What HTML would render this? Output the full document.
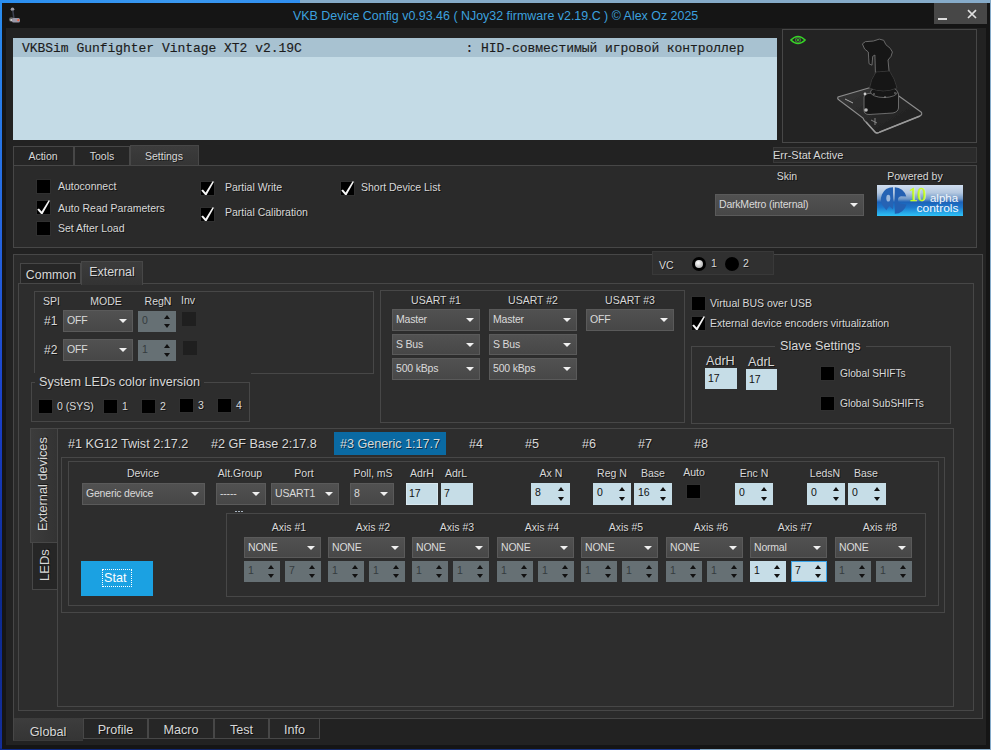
<!DOCTYPE html><html><head><meta charset="utf-8"><style>
*{margin:0;padding:0;box-sizing:border-box}
html,body{width:991px;height:750px;overflow:hidden}
body{position:relative;background:linear-gradient(90deg,#1f8ff0 0%,#4aa0e8 40%,#9ab8d0 100%);font-family:"Liberation Sans",sans-serif;font-size:10.5px;color:#d8d8d8}
.a{position:absolute}
.t{position:absolute;white-space:nowrap;line-height:13px;text-shadow:1px 1px 0 rgba(0,0,0,.55)}
.c{text-align:center}
.bd{border:1px solid #474747}
.dd{position:absolute;background:linear-gradient(#515151,#474747);border:1px solid #5a5a5a;box-sizing:content-box;color:#dadada}
.dd span{position:absolute;left:3px;top:3px;line-height:13px;white-space:nowrap;letter-spacing:-0.2px}
.dd i{position:absolute;right:5px;top:50%;margin-top:-2px;width:0;height:0;border-left:4px solid transparent;border-right:4px solid transparent;border-top:4.5px solid #f0f0f0}
.sp{position:absolute;background:#66706f;background:#667074;color:#353b3e}
.sp.en{background:#c6dde7;color:#111}
.sp span{position:absolute;left:4px;top:2.5px;line-height:13px}
.sp.foc{box-shadow:inset 0 0 0 1px #3aa6ec}
.sp b{position:absolute;right:6.5px;width:0;height:0;border-left:3.5px solid transparent;border-right:3.5px solid transparent}
.sp b.up{top:4px;border-bottom:4px solid #111}
.sp b.dn{bottom:4px;border-top:4px solid #111}
.cb{position:absolute;width:13px;height:13px;background:#000;box-shadow:0 0 0 1px #303030}
.cb svg{position:absolute;left:-1px;top:-1px}
</style></head><body><div class="a " style="left:0px;top:0px;width:991px;height:750px;background:#86abc9"></div>
<div class="a " style="left:0px;top:0px;width:300px;height:4px;background:linear-gradient(90deg,#2a8ef0,#3a98f0 60%,#2f8ef0)"></div>
<div class="a " style="left:0px;top:0px;width:2px;height:750px;background:linear-gradient(#2a8ef0,#2566e0 30%,#1a3fc8 55%,#0c2a90 80%,#142e9a)"></div>
<div class="a " style="left:0px;top:748px;width:700px;height:2px;background:linear-gradient(90deg,#0e2a8a,#13245e 40%,#1a3480 70%,#2040a0)"></div>
<div class="a " style="left:2px;top:3px;width:988px;height:746px;background:#151515"></div>
<div class="a " style="left:6px;top:28px;width:980px;height:717px;background:#222222"></div>
<div class="t " style="left:293px;top:9px;color:#3ca0de;font-size:12.45px;line-height:15px;text-shadow:none">VKB Device Config v0.93.46 ( NJoy32 firmware v2.19.C ) &copy; Alex Oz 2025</div>
<div class="a " style="left:934px;top:3px;width:53px;height:21px;background:#474747"></div>
<div class="a " style="left:938px;top:18px;width:9px;height:2px;background:#dcdcdc;height:1.6px"></div>
<svg class="a" style="left:967px;top:9px" width="10" height="10" viewBox="0 0 10 10"><path d="M1 1.2 L9 9 M9 1.2 L1 9" stroke="#e0e0e0" stroke-width="1.7"/></svg>
<svg class="a" style="left:7px;top:6px" width="14" height="18" viewBox="0 0 14 18"><circle cx="5.5" cy="3.2" r="1.8" fill="#9a9aa4"/><path d="M5.8 4.5 L7 13" stroke="#3c4050" stroke-width="1.6"/><ellipse cx="4.5" cy="13.5" rx="2.5" ry="2.2" fill="#6a6a6a"/><rect x="5" y="12" width="8" height="4.5" rx="1.5" fill="#9a98a8"/><circle cx="11.3" cy="14.2" r="1.1" fill="#e86040"/><circle cx="4.2" cy="14" r="0.9" fill="#ddd"/></svg>
<div class="a " style="left:13px;top:38px;width:764px;height:102px;background:#c4dbe6"></div>
<div class="a " style="left:13px;top:38px;width:764px;height:19px;background:#a8c2d1"></div>
<div class="t " style="left:22px;top:41px;letter-spacing:-0.03px;font-family:'Liberation Mono',monospace;font-size:13px;color:#1c1c1c;text-shadow:none;line-height:15px;-webkit-text-stroke:0.15px #1c1c1c">VKBSim Gunfighter Vintage XT2 v2.19C</div>
<div class="t " style="left:465.6px;top:41px;letter-spacing:-0.06px;font-family:'Liberation Mono',monospace;font-size:13px;color:#1c1c1c;text-shadow:none;line-height:15px;-webkit-text-stroke:0.15px #1c1c1c">: HID-совместимый игровой контроллер</div>
<div class="a bd" style="left:782px;top:29px;width:195px;height:114px;background:#232323"></div>
<svg class="a" style="left:790px;top:35px" width="16" height="10" viewBox="0 0 16 10"><path d="M0.9 5 Q8 -2.2 15.1 5 Q8 12.2 0.9 5Z" fill="none" stroke="#36d626" stroke-width="1.5"/><circle cx="8" cy="5" r="2.4" fill="none" stroke="#4a7a40" stroke-width="1.1"/><circle cx="8" cy="5" r="1" fill="#36d626"/></svg>
<svg class="a" style="left:825px;top:30px" width="110" height="110" viewBox="0 0 110 110">
<defs><linearGradient id="pl" x1="0" y1="0" x2="1" y2="1"><stop offset="0" stop-color="#363636"/><stop offset="1" stop-color="#1c1c1c"/></linearGradient>
<filter id="gl" x="-10%" y="-10%" width="120%" height="120%"><feGaussianBlur stdDeviation="0.45"/></filter></defs>
<g filter="url(#gl)">
<path d="M13 67 Q12 69 14 70 L26 79 L38 88 Q39 91 41 92 L50 102 Q52 104 55 102 L95 86 Q98 84 96 82 L60 56 Q57 54 54 55 Z" fill="url(#pl)" stroke="#8c8c8c" stroke-width="1.1"/>
<path d="M41 92 L50 102 Q52 104 55 102 L95 86" fill="none" stroke="#9a9a9a" stroke-width="1.5"/>
<path d="M39 67 Q39 64 43 63.5 L70 61 Q73.5 61 73.5 64 L73.5 78 Q73 82 68 83 L44 84.5 Q39 84.5 39 80 Z" fill="#181818" stroke="#6a6a6a" stroke-width="1"/>
<ellipse cx="59" cy="62" rx="13.5" ry="5.5" fill="#121212" stroke="#666" stroke-width="1"/>
<path d="M37.4 13.9 L40.3 11.7 L48.4 11 L54.3 9.1 L58.7 10.3 L60.9 14.7 L65.2 18.3 L67.4 22 L66 26.4 L63 30 L64.5 46 L50.5 46 L49.9 25 L47.7 26.4 L47 35.2 L44 33.7 L43.3 22 L39.6 19 Z" fill="#151515" stroke="#6a6a6a" stroke-width="1" stroke-linejoin="round"/>
<path d="M44.5 58 Q46 49 51 42 L64.5 41 Q70 49 72 58 Q58 64 44.5 58 Z" fill="#121212" stroke="#3e3e3e" stroke-width="0.8"/>
<circle cx="40" cy="64" r="1.4" fill="#ccc"/><circle cx="41" cy="80" r="1.8" fill="#bbb"/>
<circle cx="49" cy="64" r="0.8" fill="#999"/><circle cx="60" cy="67" r="0.8" fill="#999"/><circle cx="70" cy="63" r="0.8" fill="#999"/>
<path d="M20 69 L28 73" stroke="#aaa" stroke-width="1"/>
<path d="M46 90 L52 93 M50 88 L50 95" stroke="#999" stroke-width="0.8"/>
</g>
</svg>
<div class="a bd" style="left:13px;top:146px;width:61px;height:20px;background:#262626"></div>
<div class="a bd" style="left:74px;top:146px;width:56px;height:20px;background:#262626"></div>
<div class="a bd" style="left:130px;top:145px;width:69px;height:22px;background:linear-gradient(#3c3c3c,#343434);border-bottom:none"></div>
<div class="t c " style="left:13px;top:150px;width:60px;">Action</div>
<div class="t c " style="left:74px;top:150px;width:56px;">Tools</div>
<div class="t c " style="left:130px;top:150px;width:68px;">Settings</div>
<div class="a " style="left:773px;top:147px;width:204px;height:16px;background:#2b2b2b;border:1px solid #3a3a3a"></div>
<div class="t " style="left:773px;top:149px;font-size:11px">Err-Stat Active</div>
<div class="a bd" style="left:13px;top:165px;width:964px;height:83px;background:#2a2a2a"></div>
<div class="cb" style="left:37px;top:180px;"></div>
<div class="t " style="left:58px;top:180px;">Autoconnect</div>
<div class="cb" style="left:37px;top:201px;"><svg width="16" height="16" viewBox="0 -1 16 16" style="overflow:visible"><path d="M1.2 8.6 L2.9 7.6 L5.6 10.6 L12.6 -0.8 L14 -0.2 L6.6 13 L5.1 13 Z" fill="#f4f4f4"/></svg></div>
<div class="t " style="left:58px;top:202px;">Auto Read Parameters</div>
<div class="cb" style="left:37px;top:222px;"></div>
<div class="t " style="left:58px;top:222px;">Set After Load</div>
<div class="cb" style="left:201px;top:182px;"><svg width="16" height="16" viewBox="0 -1 16 16" style="overflow:visible"><path d="M1.2 8.6 L2.9 7.6 L5.6 10.6 L12.6 -0.8 L14 -0.2 L6.6 13 L5.1 13 Z" fill="#f4f4f4"/></svg></div>
<div class="t " style="left:225px;top:181px;">Partial Write</div>
<div class="cb" style="left:201px;top:208px;"><svg width="16" height="16" viewBox="0 -1 16 16" style="overflow:visible"><path d="M1.2 8.6 L2.9 7.6 L5.6 10.6 L12.6 -0.8 L14 -0.2 L6.6 13 L5.1 13 Z" fill="#f4f4f4"/></svg></div>
<div class="t " style="left:225px;top:206px;">Partial Calibration</div>
<div class="cb" style="left:341px;top:182px;"><svg width="16" height="16" viewBox="0 -1 16 16" style="overflow:visible"><path d="M1.2 8.6 L2.9 7.6 L5.6 10.6 L12.6 -0.8 L14 -0.2 L6.6 13 L5.1 13 Z" fill="#f4f4f4"/></svg></div>
<div class="t " style="left:361px;top:181px;">Short Device List</div>
<div class="t c " style="left:757px;top:170px;width:60px;">Skin</div>
<div class="t c " style="left:870px;top:170px;width:90px;">Powered by</div>
<div class="dd" style="left:715px;top:194px;width:147px;height:20px;"><span>DarkMetro (internal)</span><i></i></div>
<svg class="a" style="left:877px;top:185px" width="86" height="31" viewBox="0 0 86 31">
<defs><linearGradient id="lg" x1="0" y1="0" x2="0" y2="1"><stop offset="0" stop-color="#d0def0"/><stop offset=".25" stop-color="#b4c8e0"/><stop offset=".45" stop-color="#6f98c8"/><stop offset=".55" stop-color="#1d62b8"/><stop offset=".72" stop-color="#1c78cc"/><stop offset="1" stop-color="#2ec4f8"/></linearGradient></defs>
<rect width="86" height="31" fill="url(#lg)"/>
<path d="M16 2.2 A12 12 0 0 0 7.3 22.5 L9.3 25.3 L12.3 21 L16 24.5 Z" fill="#2663b4"/>
<ellipse cx="11.3" cy="13.2" rx="2" ry="3.4" fill="#9cb8dc"/>
<path d="M17.8 2.2 A12 13 0 0 1 29.3 11.5 L24 11.3 Q20.8 12 21 15.2 Q21.4 18.5 24.8 18.8 L29.5 19.5 A12 12.5 0 0 1 17.8 28.8 Z" fill="#2360b2"/>
<text x="32" y="16" font-family="Liberation Serif" font-size="18" fill="#ccff22" stroke="#ccff22" stroke-width="0.5" textLength="17" lengthAdjust="spacingAndGlyphs">10</text>
<text x="53" y="17.3" font-family="Liberation Sans" font-size="11" fill="#f4f8fc" textLength="28" lengthAdjust="spacingAndGlyphs">alpha</text>
<text x="39.5" y="26.6" font-family="Liberation Sans" font-size="10.5" fill="#f4f8fc" textLength="42" lengthAdjust="spacingAndGlyphs">controls</text>
</svg>
<div class="a bd" style="left:13px;top:254px;width:970px;height:465px;background:#2b2b2b"></div>
<div class="a bd" style="left:18px;top:283px;width:956px;height:428px;background:#2d2d2d"></div>
<div class="a " style="left:652px;top:251px;width:122px;height:24px;background:#303030;border:1px solid #393939"></div>
<div class="t " style="left:659px;top:259px;">VC</div>
<div class="a" style="left:692px;top:257px;width:14px;height:14px;border-radius:50%;background:#000"></div>
<div class="a" style="left:695px;top:260px;width:8px;height:8px;border-radius:50%;background:radial-gradient(circle at 40% 35%,#fff,#999)"></div>
<div class="t " style="left:711px;top:257px;">1</div>
<div class="a" style="left:725px;top:257px;width:14px;height:14px;border-radius:50%;background:#000"></div>
<div class="t " style="left:743px;top:257px;">2</div>
<div class="a bd" style="left:20px;top:263px;width:61px;height:21px;background:#262626"></div>
<div class="a bd" style="left:81px;top:261px;width:62px;height:24px;background:linear-gradient(#3c3c3c,#333);border-bottom:none"></div>
<div class="t c " style="left:21px;top:268px;width:60px;font-size:12.4px;line-height:14px">Common</div>
<div class="t c " style="left:82px;top:265px;width:60px;font-size:12.4px;line-height:14px">External</div>
<div class="a bd" style="left:34px;top:291px;width:340px;height:83px;"></div>
<div class="t " style="left:43px;top:295px;">SPI</div>
<div class="t c " style="left:76px;top:295px;width:60px;">MODE</div>
<div class="t c " style="left:138px;top:295px;width:40px;">RegN</div>
<div class="t " style="left:181px;top:294px;">Inv</div>
<div class="t " style="left:44px;top:315px;font-size:12px">#1</div>
<div class="dd" style="left:63px;top:310px;width:68px;height:20px;"><span>OFF</span><i></i></div>
<div class="sp " style="left:138px;top:311px;width:38px;height:21px;"><span>0</span><b class="up"></b><b class="dn"></b></div>
<div class="a " style="left:182px;top:312px;width:14px;height:14px;background:#1f1f1f"></div>
<div class="t " style="left:44px;top:344px;font-size:12px">#2</div>
<div class="dd" style="left:63px;top:339px;width:68px;height:20px;"><span>OFF</span><i></i></div>
<div class="sp " style="left:138px;top:340px;width:38px;height:21px;"><span>1</span><b class="up"></b><b class="dn"></b></div>
<div class="a " style="left:183px;top:341px;width:14px;height:14px;background:#1f1f1f"></div>
<div class="a " style="left:30px;top:373px;width:221px;height:50px;background:#2d2d2d"></div>
<div class="a bd" style="left:31px;top:382px;width:219px;height:40px;"></div>
<div class="t" style="left:35px;top:375px;padding:0 4px;background:#2d2d2d;font-size:12.6px;line-height:15px">System LEDs color inversion</div>
<div class="cb" style="left:39px;top:400px;"></div>
<div class="t " style="left:57px;top:400px;">0 (SYS)</div>
<div class="cb" style="left:104px;top:400px;"></div>
<div class="t " style="left:122px;top:400px;">1</div>
<div class="cb" style="left:142px;top:400px;"></div>
<div class="t " style="left:160px;top:400px;">2</div>
<div class="cb" style="left:180px;top:399px;"></div>
<div class="t " style="left:198px;top:399px;">3</div>
<div class="cb" style="left:218px;top:399px;"></div>
<div class="t " style="left:236px;top:399px;">4</div>
<div class="a bd" style="left:380px;top:290px;width:305px;height:133px;"></div>
<div class="t c " style="left:396px;top:294px;width:80px;">USART #1</div>
<div class="t c " style="left:493px;top:294px;width:80px;">USART #2</div>
<div class="t c " style="left:590px;top:294px;width:80px;">USART #3</div>
<div class="dd" style="left:392px;top:309px;width:86px;height:20px;"><span>Master</span><i></i></div>
<div class="dd" style="left:489px;top:309px;width:86px;height:20px;"><span>Master</span><i></i></div>
<div class="dd" style="left:586px;top:309px;width:86px;height:20px;"><span>OFF</span><i></i></div>
<div class="dd" style="left:392px;top:334px;width:86px;height:19px;"><span>S Bus</span><i></i></div>
<div class="dd" style="left:489px;top:334px;width:86px;height:19px;"><span>S Bus</span><i></i></div>
<div class="dd" style="left:392px;top:358px;width:86px;height:20px;"><span>500 kBps</span><i></i></div>
<div class="dd" style="left:489px;top:358px;width:86px;height:20px;"><span>500 kBps</span><i></i></div>
<div class="cb" style="left:692px;top:297px;"></div>
<div class="t " style="left:710px;top:297px;">Virtual BUS over USB</div>
<div class="cb" style="left:692px;top:317px;"><svg width="16" height="16" viewBox="0 -1 16 16" style="overflow:visible"><path d="M1.2 8.6 L2.9 7.6 L5.6 10.6 L12.6 -0.8 L14 -0.2 L6.6 13 L5.1 13 Z" fill="#f4f4f4"/></svg></div>
<div class="t " style="left:710px;top:317px;">External device encoders virtualization</div>
<div class="a bd" style="left:691px;top:346px;width:260px;height:78px;"></div>
<div class="t" style="left:775px;top:339px;padding:0 5px;background:#2d2d2d;font-size:12.6px;line-height:15px">Slave Settings</div>
<div class="t " style="left:706px;top:354px;font-size:12.6px;line-height:15px">AdrH</div>
<div class="t " style="left:748px;top:355px;font-size:12.6px;line-height:15px">AdrL</div>
<div class="a " style="left:705px;top:368px;width:32px;height:21px;background:#c6dde7"></div>
<div class="t " style="left:708px;top:372px;color:#111;text-shadow:none">17</div>
<div class="a " style="left:746px;top:369px;width:31px;height:21px;background:#c6dde7"></div>
<div class="t " style="left:749px;top:373px;color:#111;text-shadow:none">17</div>
<div class="cb" style="left:821px;top:367px;"></div>
<div class="t " style="left:840px;top:367px;font-size:10.2px">Global SHIFTs</div>
<div class="cb" style="left:821px;top:397px;"></div>
<div class="t " style="left:840px;top:397px;font-size:10.2px">Global SubSHIFTs</div>
<div class="a bd" style="left:57px;top:428px;width:897px;height:279px;"></div>
<div class="a bd" style="left:30px;top:428px;width:28px;height:115px;background:linear-gradient(90deg,#3c3c3c,#333)"></div>
<div class="t" style="left:35px;top:531px;transform-origin:0 0;transform:rotate(-90deg);font-size:12.8px;line-height:15px">External devices</div>
<div class="a bd" style="left:32px;top:542px;width:26px;height:48px;background:#262626"></div>
<div class="t" style="left:37px;top:581px;transform-origin:0 0;transform:rotate(-90deg);font-size:13px;line-height:15px">LEDs</div>
<div class="t " style="left:68px;top:437px;font-size:12.6px;line-height:15px">#1 KG12 Twist 2:17.2</div>
<div class="t " style="left:211px;top:437px;font-size:12.6px;line-height:15px">#2 GF Base 2:17.8</div>
<div class="a " style="left:334px;top:432px;width:112px;height:23px;background:#0a6aa3"></div>
<div class="t " style="left:340px;top:437px;font-size:12.6px;line-height:15px">#3 Generic 1:17.7</div>
<div class="t " style="left:469px;top:437px;font-size:12.6px;line-height:15px">#4</div>
<div class="t " style="left:525px;top:437px;font-size:12.6px;line-height:15px">#5</div>
<div class="t " style="left:582px;top:437px;font-size:12.6px;line-height:15px">#6</div>
<div class="t " style="left:638px;top:437px;font-size:12.6px;line-height:15px">#7</div>
<div class="t " style="left:694px;top:437px;font-size:12.6px;line-height:15px">#8</div>
<div class="a bd" style="left:61px;top:457px;width:884px;height:156px;"></div>
<div class="a bd" style="left:68px;top:461px;width:871px;height:145px;"></div>
<div class="t c " style="left:103px;top:467px;width:80px;">Device</div>
<div class="t c " style="left:200px;top:467px;width:80px;">Alt.Group</div>
<div class="t c " style="left:264px;top:467px;width:80px;">Port</div>
<div class="t c " style="left:333px;top:467px;width:80px;">Poll, mS</div>
<div class="t c " style="left:382px;top:467px;width:80px;">AdrH</div>
<div class="t c " style="left:416px;top:467px;width:80px;">AdrL</div>
<div class="t c " style="left:511px;top:467px;width:80px;">Ax N</div>
<div class="t c " style="left:572px;top:467px;width:80px;">Reg N</div>
<div class="t c " style="left:613px;top:467px;width:80px;">Base</div>
<div class="t c " style="left:714px;top:467px;width:80px;">Enc N</div>
<div class="t c " style="left:785px;top:467px;width:80px;">LedsN</div>
<div class="t c " style="left:826px;top:467px;width:80px;">Base</div>
<div class="t c " style="left:674px;top:466px;width:40px;">Auto</div>
<div class="dd" style="left:82px;top:483px;width:121px;height:20px;"><span>Generic device</span><i></i></div>
<div class="dd" style="left:216px;top:483px;width:48px;height:20px;"><span>-----</span><i></i></div>
<div class="dd" style="left:271px;top:483px;width:66px;height:20px;"><span>USART1</span><i></i></div>
<div class="dd" style="left:350px;top:483px;width:42px;height:20px;"><span>8</span><i></i></div>
<div class="a " style="left:406px;top:483px;width:32px;height:22px;background:#c6dde7;border:1px solid #d8e8ef"></div>
<div class="t " style="left:409px;top:487px;color:#111;text-shadow:none">17</div>
<div class="a " style="left:441px;top:483px;width:32px;height:22px;background:#c6dde7"></div>
<div class="t " style="left:444px;top:487px;color:#111;text-shadow:none">7</div>
<div class="sp en " style="left:531px;top:483px;width:39px;height:22px;"><span>8</span><b class="up"></b><b class="dn"></b></div>
<div class="sp en " style="left:593px;top:483px;width:38px;height:22px;"><span>0</span><b class="up"></b><b class="dn"></b></div>
<div class="sp en " style="left:634px;top:483px;width:38px;height:22px;"><span>16</span><b class="up"></b><b class="dn"></b></div>
<div class="cb" style="left:687px;top:485px;"></div>
<div class="sp en " style="left:735px;top:483px;width:38px;height:22px;"><span>0</span><b class="up"></b><b class="dn"></b></div>
<div class="sp en " style="left:807px;top:483px;width:38px;height:22px;"><span>0</span><b class="up"></b><b class="dn"></b></div>
<div class="sp en " style="left:848px;top:483px;width:38px;height:22px;"><span>0</span><b class="up"></b><b class="dn"></b></div>
<div class="a " style="left:235px;top:511px;width:2px;height:1px;background:#a8b4c0"></div>
<div class="a " style="left:238px;top:511px;width:2px;height:1px;background:#a8b4c0"></div>
<div class="a " style="left:241px;top:511px;width:2px;height:1px;background:#a8b4c0"></div>
<div class="a bd" style="left:226px;top:513px;width:700px;height:84px;"></div>
<div class="t c " style="left:249px;top:521px;width:80px;">Axis #1</div>
<div class="dd" style="left:244px;top:537px;width:75px;height:19px;"><span>NONE</span><i></i></div>
<div class="sp " style="left:244px;top:561px;width:36px;height:21px;"><span>1</span><b class="up"></b><b class="dn"></b></div>
<div class="sp " style="left:285px;top:561px;width:36px;height:21px;"><span>7</span><b class="up"></b><b class="dn"></b></div>
<div class="t c " style="left:333px;top:521px;width:80px;">Axis #2</div>
<div class="dd" style="left:328px;top:537px;width:75px;height:19px;"><span>NONE</span><i></i></div>
<div class="sp " style="left:328px;top:561px;width:36px;height:21px;"><span>1</span><b class="up"></b><b class="dn"></b></div>
<div class="sp " style="left:369px;top:561px;width:36px;height:21px;"><span>1</span><b class="up"></b><b class="dn"></b></div>
<div class="t c " style="left:417px;top:521px;width:80px;">Axis #3</div>
<div class="dd" style="left:412px;top:537px;width:75px;height:19px;"><span>NONE</span><i></i></div>
<div class="sp " style="left:412px;top:561px;width:36px;height:21px;"><span>1</span><b class="up"></b><b class="dn"></b></div>
<div class="sp " style="left:453px;top:561px;width:36px;height:21px;"><span>1</span><b class="up"></b><b class="dn"></b></div>
<div class="t c " style="left:502px;top:521px;width:80px;">Axis #4</div>
<div class="dd" style="left:497px;top:537px;width:75px;height:19px;"><span>NONE</span><i></i></div>
<div class="sp " style="left:497px;top:561px;width:36px;height:21px;"><span>1</span><b class="up"></b><b class="dn"></b></div>
<div class="sp " style="left:538px;top:561px;width:36px;height:21px;"><span>1</span><b class="up"></b><b class="dn"></b></div>
<div class="t c " style="left:586px;top:521px;width:80px;">Axis #5</div>
<div class="dd" style="left:581px;top:537px;width:75px;height:19px;"><span>NONE</span><i></i></div>
<div class="sp " style="left:581px;top:561px;width:36px;height:21px;"><span>1</span><b class="up"></b><b class="dn"></b></div>
<div class="sp " style="left:622px;top:561px;width:36px;height:21px;"><span>1</span><b class="up"></b><b class="dn"></b></div>
<div class="t c " style="left:671px;top:521px;width:80px;">Axis #6</div>
<div class="dd" style="left:666px;top:537px;width:75px;height:19px;"><span>NONE</span><i></i></div>
<div class="sp " style="left:666px;top:561px;width:36px;height:21px;"><span>1</span><b class="up"></b><b class="dn"></b></div>
<div class="sp " style="left:707px;top:561px;width:36px;height:21px;"><span>1</span><b class="up"></b><b class="dn"></b></div>
<div class="t c " style="left:755px;top:521px;width:80px;">Axis #7</div>
<div class="dd" style="left:750px;top:537px;width:75px;height:19px;"><span>Normal</span><i></i></div>
<div class="sp en " style="left:750px;top:561px;width:36px;height:21px;"><span>1</span><b class="up"></b><b class="dn"></b></div>
<div class="sp en foc" style="left:791px;top:561px;width:36px;height:21px;"><span>7</span><b class="up"></b><b class="dn"></b></div>
<div class="t c " style="left:840px;top:521px;width:80px;">Axis #8</div>
<div class="dd" style="left:835px;top:537px;width:75px;height:19px;"><span>NONE</span><i></i></div>
<div class="sp " style="left:835px;top:561px;width:36px;height:21px;"><span>1</span><b class="up"></b><b class="dn"></b></div>
<div class="sp " style="left:876px;top:561px;width:36px;height:21px;"><span>1</span><b class="up"></b><b class="dn"></b></div>
<div class="a " style="left:81px;top:561px;width:72px;height:35px;background:#1ba1e2"></div>
<div class="a" style="left:102px;top:569px;width:30px;height:18px;border:1px dotted #fff"></div>
<div class="t " style="left:104px;top:571px;font-size:12.6px;line-height:15px;text-shadow:none;color:#fff">Stat</div>
<div class="a " style="left:13px;top:718px;width:70px;height:23px;background:linear-gradient(#3d3d3d,#353535);border-left:1px solid #474747;border-bottom:1px solid #3a3a3a"></div>
<div class="t c " style="left:13px;top:725px;width:70px;font-size:12.6px;line-height:15px">Global</div>
<div class="a bd" style="left:83px;top:718px;width:65px;height:21px;background:#262626"></div>
<div class="t c " style="left:83px;top:723px;width:65px;font-size:12.6px;line-height:15px">Profile</div>
<div class="a bd" style="left:148px;top:718px;width:66px;height:21px;background:#262626"></div>
<div class="t c " style="left:148px;top:723px;width:66px;font-size:12.6px;line-height:15px">Macro</div>
<div class="a bd" style="left:214px;top:718px;width:55px;height:21px;background:#262626"></div>
<div class="t c " style="left:214px;top:723px;width:55px;font-size:12.6px;line-height:15px">Test</div>
<div class="a bd" style="left:269px;top:718px;width:51px;height:21px;background:#262626"></div>
<div class="t c " style="left:269px;top:723px;width:51px;font-size:12.6px;line-height:15px">Info</div></body></html>
